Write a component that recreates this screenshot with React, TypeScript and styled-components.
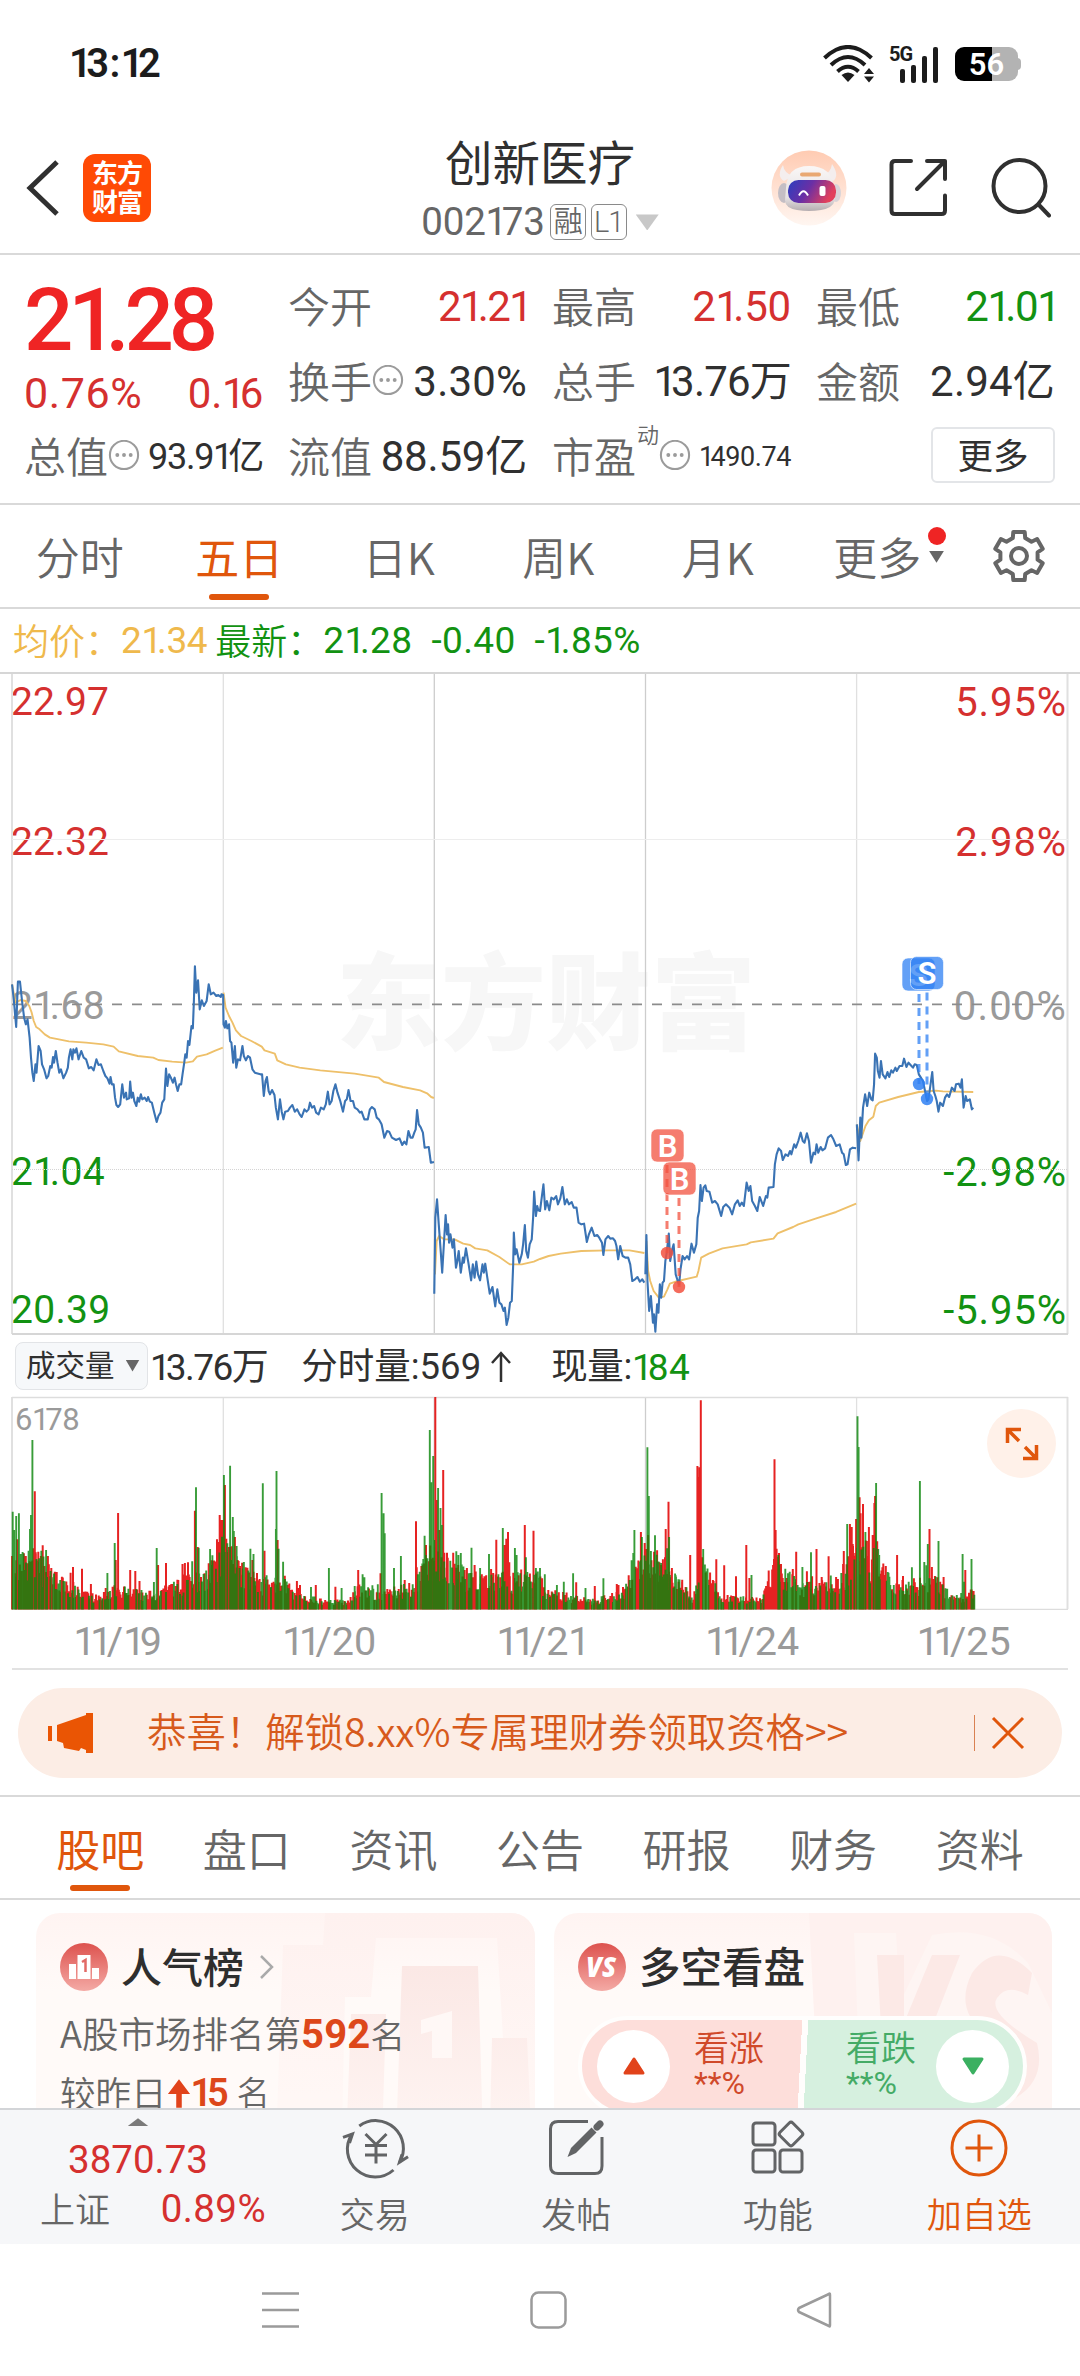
import React from "react";
import styled, { createGlobalStyle, css } from "styled-components";

const C = {
  red: "#d5302f",
  bright: "#ef2424",
  green: "#129212",
  orange: "#e0560c",
  brand: "#ff4a05",
  text: "#303030",
  sub: "#666666",
  mute: "#9a9a9a",
  line: "#d9d9d9",
  bar: "#f6f7f9",
};

const Global = createGlobalStyle`
  * { box-sizing: border-box; }
  html, body { margin: 0; padding: 0; background: #fff; }
  body { width: 1080px; font-family: Roboto, "Noto Sans CJK SC", sans-serif; color: ${C.text}; }
`;

const Screen = styled.div`
  width: 1080px;
  height: 2376px;
  display: flex;
  flex-direction: column;
  overflow: hidden;
  background: #fff;
`;

interface TextProps { $s: number; $c?: string; $w?: number; $ls?: number }
const Text = styled.span<TextProps>`
  font-size: ${(p) => p.$s}px;
  line-height: 1;
  color: ${(p) => p.$c ?? C.text};
  font-weight: ${(p) => p.$w ?? 400};
  letter-spacing: ${(p) => p.$ls ?? 0}px;
  white-space: pre;
`;
const Han = styled(Text)`
  font-family: "Noto Sans CJK SC", sans-serif;
  font-weight: ${(p) => p.$w ?? 350};
  padding-bottom: 4px;
`;
const NarrowOne = styled.span`
  letter-spacing: -0.14em;
`;

/* Numeral text with a proportional-width "1". */
function Num({ children, ...rest }: TextProps & { children: string }) {
  return (
    <Text {...rest}>
      {children.split(/(1)/).map((t, i) => (t === "1" ? <NarrowOne key={i}>1</NarrowOne> : t))}
    </Text>
  );
}

/* ---------- status bar ---------- */
const StatusBar = styled.div`
  height: 128px;
  display: flex;
  justify-content: space-between;
  align-items: center;
  padding: 0 59px 0 69px;
`;
const StatusIcons = styled.div`
  display: flex;
  align-items: center;
  height: 40px;
  gap: 14px;
`;
const Battery = styled.div`
  position: relative;
  width: 63px;
  height: 34px;
  border-radius: 9px;
  background: linear-gradient(90deg, #000 0 37px, #b3b3b3 37px);
  display: flex;
  align-items: center;
  justify-content: center;
  margin: 1px 3px 0 3px;
  &::after {
    content: "";
    position: absolute;
    right: -3px;
    top: 11px;
    width: 4px;
    height: 12px;
    border-radius: 0 4px 4px 0;
    background: #b3b3b3;
  }
`;

function Wifi() {
  return (
    <svg width="52" height="38" viewBox="0 0 52 38" fill="none" stroke="#1c1c1c" strokeWidth="4">
      <path d="M1.500 13 Q25 -9 48.500 13" />
      <path d="M8 20 Q25 4 42 20" />
      <path d="M14.500 26.500 Q25 17 35.500 26.500" />
      <path d="M18.500 30 Q25 25 31.500 30 L25 37 Z" fill="#1c1c1c" stroke="none" />
      <path d="M46 23 l5 6 h-10 z M46 37.500 l5 -6 h-10 z" fill="#1c1c1c" stroke="none" />
    </svg>
  );
}
const Signal = styled.div`
  position: relative;
  width: 49px;
  height: 38px;
  display: flex;
  align-items: flex-end;
  justify-content: flex-end;
  gap: 6px;
`;
const SignalBar = styled.i<{ $h: number }>`
  width: 5px;
  height: ${(p) => p.$h}px;
  border-radius: 2px;
  background: #1c1c1c;
`;
const NetTag = styled.span`
  position: absolute;
  left: 0;
  top: 0;
  font: 700 20px/18px Roboto, sans-serif;
  letter-spacing: -1px;
  color: #1c1c1c;
`;

/* ---------- header ---------- */
const Header = styled.header`
  height: 127px;
  border-bottom: 2px solid ${C.line};
  display: grid;
  grid-template-columns: 360px 1fr 360px;
`;
const HeaderLeft = styled.div`
  display: flex;
  align-items: center;
  padding: 0 0 5px 26px;
  gap: 24px;
`;
const Logo = styled.div`
  width: 68px;
  height: 68px;
  border-radius: 12px;
  background: ${C.brand};
  color: #fff;
  display: grid;
  place-content: center;
  font: 700 26px/29px "Noto Sans CJK SC", sans-serif;
  letter-spacing: -1px;
  padding-bottom: 3px;
`;
const HeaderCenter = styled.div`
  display: flex;
  flex-direction: column;
  align-items: center;
  padding-top: 9px;
  gap: 16px;
`;
const CodeRow = styled.div`
  display: flex;
  align-items: center;
  gap: 5px;
  height: 36px;
`;
const Tag = styled.span`
  width: 36px;
  height: 36px;
  border: 1.5px solid #8a8a8a;
  border-radius: 6px;
  display: grid;
  place-content: center;
  font: 350 29px/1 Roboto, "Noto Sans CJK SC", sans-serif;
  letter-spacing: -1px;
  color: ${C.sub};
`;
const Caret = styled.i<{ $w: number; $h: number; $c: string; $up?: boolean; $ml?: number }>`
  width: ${(p) => p.$w}px;
  height: ${(p) => p.$h}px;
  margin-left: ${(p) => p.$ml ?? 0}px;
  flex: none;
  background: ${(p) => p.$c};
  clip-path: ${(p) => (p.$up ? "polygon(50% 0, 100% 100%, 0 100%)" : "polygon(0 0, 100% 0, 50% 100%)")};
`;
const HeaderRight = styled.div`
  display: flex;
  align-items: center;
  padding: 0 29px 5px 51px;
  justify-content: space-between;
`;

function Robot() {
  return (
    <svg width="76" height="76" viewBox="0 0 76 76">
      <defs>
        <linearGradient id="rbBg" x1="0" y1="0" x2="0" y2="1">
          <stop offset="0" stopColor="#ffcbb2" /><stop offset="1" stopColor="#fff6f1" />
        </linearGradient>
        <linearGradient id="rbFace" x1="0" y1="0" x2="1" y2="0.300">
          <stop offset="0" stopColor="#2a3fc0" /><stop offset="0.500" stopColor="#6a2fa5" /><stop offset="1" stopColor="#e2405c" />
        </linearGradient>
        <linearGradient id="rbHead" x1="0" y1="0" x2="0" y2="1">
          <stop offset="0" stopColor="#faf7f6" /><stop offset="0.700" stopColor="#e6e2e3" /><stop offset="1" stopColor="#b5adb0" />
        </linearGradient>
      </defs>
      <circle cx="38" cy="38" r="37.500" fill="url(#rbBg)" />
      <path d="M12 15 Q5 26 13 31 L22 26 Q13 23 12 15Z M61 14 Q69 26 62 31 L53 25 Q60 22 61 14Z" fill="#f4eeee" />
      <ellipse cx="13" cy="43" rx="6" ry="10" fill="#c4bec4" />
      <ellipse cx="65" cy="43" rx="5" ry="9" fill="#d9d4d8" />
      <path d="M15 38 Q16 16 38 16 Q61 16 63 38 L64 50 Q62 58 50 60 Q38 62 26 60 Q14 58 14 50Z" fill="url(#rbHead)" />
      <rect x="29" y="22.500" width="21" height="4" rx="2" fill="#e9a872" />
      <rect x="17" y="30" width="48" height="23" rx="10.500" fill="url(#rbFace)" />
      <path d="M28 45.500 Q32.500 37 37 45.500" fill="none" stroke="#fff" strokeWidth="2" />
      <rect x="48.500" y="36" width="6" height="10" rx="2" fill="#fff" />
    </svg>
  );
}
const ShareIcon = () => (
  <svg width="60" height="60" viewBox="0 0 60 60" fill="none" stroke="#303030" strokeWidth="4" strokeLinecap="round" strokeLinejoin="round">
    <path d="M22 3 H6 Q2.500 3 2.500 6.500 V52.500 Q2.500 56 6 56 H52.500 Q56 56 56 52.500 V37.500" />
    <path d="M38 3 H56 V21 M56 3 L28 31" />
  </svg>
);
const SearchIcon = () => (
  <svg width="60" height="60" viewBox="0 0 60 60" fill="none" stroke="#303030" strokeWidth="4" strokeLinecap="round">
    <circle cx="28.500" cy="28" r="26" /><path d="M48 47 L58 57.500" />
  </svg>
);

/* ---------- quote ---------- */
const Quote = styled.section`
  height: 250px;
  border-bottom: 2px solid ${C.line};
  display: grid;
  grid-template-columns: repeat(4, 239px);
  column-gap: 25px;
  padding: 15px 0 0 24px;
`;
const Col = styled.div`
  display: flex;
  flex-direction: column;
`;
const Cell = styled.div<{ $h?: number; $pt?: number }>`
  height: ${(p) => p.$h ?? 75}px;
  padding-top: ${(p) => p.$pt ?? 0}px;
  display: flex;
  align-items: center;
  justify-content: space-between;
`;
const LabelBox = styled.span`
  display: flex;
  align-items: center;
`;
const Sup = styled(Han)`
  align-self: flex-start;
  margin: -12px 0 0 1px;
`;
const More = styled.div`
  width: 124px;
  height: 56px;
  margin: 0 0 4px auto;
  border: 2px solid #e3e5e8;
  border-radius: 6px;
  display: grid;
  place-content: center;
`;
const Dots = () => (
  <svg width="32" height="35" viewBox="0 0 31 34">
    <circle cx="15.500" cy="14.500" r="13.700" fill="none" stroke="#9b9b9b" strokeWidth="2" />
    {[9, 15.5, 22].map((x) => <circle key={x} cx={x} cy="14.500" r="1.900" fill="#9b9b9b" />)}
  </svg>
);

/* ---------- tabs ---------- */
const TabBar = styled.nav<{ $cols: string; $pad: string; $h: number }>`
  height: ${(p) => p.$h}px;
  border-bottom: 2px solid ${C.line};
  padding: ${(p) => p.$pad};
  display: grid;
  grid-template-columns: ${(p) => p.$cols};
`;
const Tab = styled.div<{ $on?: boolean }>`
  position: relative;
  display: flex;
  align-items: center;
  justify-content: center;
  font: 350 44px/1 "Noto Sans CJK SC", sans-serif;
  color: ${(p) => (p.$on ? C.orange : C.sub)};
  ${(p) => p.$on && css`
    font-weight: 400;
    &::after {
      content: "";
      position: absolute;
      left: calc(50% - 30px);
      bottom: 7px;
      width: 60px;
      height: 6px;
      border-radius: 3px;
      background: ${C.orange};
    }
  `}
`;
const MoreMark = styled.span`
  position: absolute;
  left: 130px;
  top: 22px;
  display: flex;
  flex-direction: column;
  align-items: center;
  gap: 6px;
`;
const RedDot = styled.i`
  width: 18px;
  height: 18px;
  border-radius: 50%;
  background: ${C.bright};
`;
function Gear() {
  const pts: string[] = [];
  for (let i = 0; i < 6; i++) {
    const a = (i * Math.PI) / 3 - Math.PI / 2;
    const p = (r: number, d: number) => `${(27 + r * Math.cos(a + d)).toFixed(1)} ${(27 + r * Math.sin(a + d)).toFixed(1)}`;
    pts.push(p(19, -0.33), p(24.8, -0.23), p(24.8, 0.23), p(19, 0.33));
  }
  return (
    <svg width="54" height="54" viewBox="0 0 54 54" fill="none" stroke="#666" strokeWidth="4" strokeLinejoin="round">
      <path d={`M${pts.join("L")}Z`} /><circle cx="27" cy="27" r="8" />
    </svg>
  );
}

/* ---------- chart ---------- */
const AvgRow = styled.div`
  height: 63px;
  display: flex;
  align-items: center;
  padding: 1px 0 0 13px;
  gap: 8px;
`;
const PriceChart = styled.section`
  position: relative;
  height: 663px;
`;
const Axis = styled.div<{ $y: number; $right?: boolean }>`
  position: absolute;
  top: ${(p) => p.$y - 690}px;
  ${(p) => (p.$right ? "right: 13px;" : "left: 11px;")}
  display: flex;
`;
const Watermark = styled.div`
  position: absolute;
  left: 336px;
  top: 269px;
  font: 900 105px/108px "Noto Sans CJK SC", sans-serif;
  color: #f7f7f7;
`;
const Plot = styled.svg`
  position: relative;
  display: block;
`;

const VLINES = [12, 223.3, 434.3, 645.5, 856.6, 1067.5];
const SX = 540 / 1568;

const PRICE = [
  "35,130 40,175 47,258 52,122 58,122 64,180 70,230 75,250 80,235 86,290 90,350 94,395 98,420 103,370 106,395 112,315 118,330 122,370 128,385 135,412 140,405 146,375 150,380 154,348 157,365 162,330 167,365 172,395 177,385 184,412 192,395 197,380 200,350 205,325 210,355 213,325 218,335 222,322 228,355 236,330 243,350 250,355 258,382 265,378 272,388 280,355 286,372 293,370 300,390 306,405 312,412 318,428 321,408 325,430 330,430 334,470 338,492 343,498 349,490 355,430 360,470 366,455 368,475 375,472 378,422 382,470 386,455 390,480 396,495 400,470 404,482 409,460 413,475 420,470 426,480 430,468 435,482 441,485 448,515 455,543 460,525 466,515 471,485 477,475 480,420 482,383 486,435 491,400 497,412 502,425 507,410 511,430 516,450 521,430 526,430 530,400 535,365 538,340 542,350 546,300 550,312 556,255 560,262 563,180 566,76 570,155 575,118 580,205 586,178 592,195 600,180 606,130 612,160 620,155 628,165 634,162 641,168 643,160 648,162 649,250 653,260 656,240 660,262 665,250 668,300 672,305 677,365 682,315 686,380 691,355 697,358 704,315 708,345 714,358 720,345 726,350 733,385 740,395 756,400 761,400 766,465 771,420 775,408 780,450 784,460 790,447 797,462 801,500 807,535 813,475 818,512 823,535 828,512 836,510 842,500 849,492 856,512 863,505 870,520 876,528 884,505 890,512 896,505 900,485 906,500 912,495 918,515 925,520 932,500 940,505 946,490 952,452 957,490 963,480 968,450 974,430 980,455 988,480 996,512 1002,480 1007,475 1012,447 1018,480 1025,480 1030,500 1038,505 1045,515 1050,512 1058,535 1068,535 1074,505 1080,498 1088,505 1094,530 1100,535 1108,550 1116,590 1124,570 1130,572 1138,590 1150,597 1160,592 1168,612 1174,602 1180,610 1186,570 1192,590 1198,590 1203,575 1207,565 1211,507 1216,550 1222,560 1228,575 1233,620 1245,618 1251,665 1260,663",
  "1261,1058 1264,830 1269,775 1274,850 1280,935 1284,995 1290,890 1294,822 1298,880 1301,850 1304,905 1308,880 1314,920 1318,895 1324,980 1328,960 1332,930 1338,995 1344,950 1347,965 1353,922 1360,965 1368,1018 1373,970 1378,1010 1383,962 1388,1000 1394,1018 1401,970 1405,995 1409,968 1415,1010 1422,1058 1430,1038 1438,1096 1444,1045 1450,1085 1456,1090 1462,1110 1466,1100 1471,1152 1476,1130 1481,1085 1486,1080 1490,975 1492,875 1496,940 1500,925 1508,965 1515,940 1519,910 1524,852 1528,930 1533,950 1538,910 1544,895 1548,830 1551,752 1556,825 1560,795 1563,808 1568,810 1573,770 1578,730 1583,805 1588,780 1595,808 1601,770 1608,775 1615,765 1620,790 1627,772 1633,738 1640,790 1646,775 1652,790 1660,783 1666,800 1674,800 1680,845 1688,850 1696,848 1704,903 1710,880 1718,860 1726,885 1734,882 1740,890 1748,905 1752,942 1758,895 1766,885 1772,893 1780,892 1786,900 1790,915 1795,955 1801,915 1808,945 1816,950 1824,950 1830,970 1836,1020 1844,1015 1851,1008 1858,1022 1865,1015 1871,1025",
  "1874,1000 1877,882 1880,1020 1885,1110 1890,1065 1896,1145 1899,1120 1903,1172 1908,1090 1912,1115 1916,1030 1920,1070 1924,1025 1928,1020 1932,960 1936,935 1942,878 1946,960 1952,925 1956,910 1962,1000 1968,1020 1972,1030 1976,985 1982,945 1988,955 1995,945 2001,955 2008,908 2015,935 2022,910 2026,830 2030,810 2034,732 2038,780 2043,740 2048,733 2052,750 2060,752 2068,785 2076,780 2084,790 2094,825 2100,798 2108,790 2118,800 2126,820 2134,790 2142,778 2148,795 2154,785 2160,795 2168,725 2174,750 2179,735 2184,780 2192,795 2199,810 2206,768 2216,795 2224,765 2228,770 2232,740 2246,738 2250,670 2255,640 2261,622 2268,630 2273,657 2281,640 2288,645 2294,630 2298,640 2306,610 2311,620 2318,600 2325,575 2331,600 2336,605 2343,577 2349,600 2355,665 2362,635 2367,640 2371,610 2376,635 2383,618 2388,628 2396,622 2404,590 2413,582 2420,595 2428,615 2438,610 2445,635 2450,640 2456,672 2461,670 2468,625 2476,620 2486,622",
  "2488,550 2493,658 2498,530 2501,590 2506,500 2512,460 2518,495 2524,455 2530,475 2534,478 2538,430 2541,338 2546,350 2549,390 2554,410 2558,360 2563,400 2571,412 2577,393 2582,408 2588,388 2593,395 2600,380 2604,390 2612,375 2620,375 2625,353 2632,378 2638,365 2644,372 2651,380 2656,370 2662,372 2668,400 2674,410 2680,420 2686,450 2692,480 2696,475 2702,430 2707,393 2711,450 2716,465 2720,480 2725,512 2730,485 2738,495 2744,470 2750,460 2756,468 2764,440 2772,450 2776,430 2784,428 2789,440 2793,415 2798,500 2804,465 2808,480 2816,475 2822,505 2826,500",
];
const AVERAGE = [
  "35,130 45,185 60,177 75,180 85,195 92,215 98,240 105,258 115,265 130,280 145,290 160,293 200,301 250,305 300,310 330,317 345,331 400,345 445,350 460,357 500,362 540,365 560,361 572,347 600,340 625,329 647,320",
  "649,155 655,200 665,225 675,245 685,268 700,285 730,300 760,317 768,328 798,338 805,358 830,370 870,380 930,388 1030,398 1100,410 1115,423 1170,438 1220,448 1240,457 1252,468 1260,471",
  "1263,1000 1268,900 1275,885 1290,895 1320,895 1345,908 1365,912 1380,922 1415,928 1450,948 1480,970 1515,970 1550,962 1568,954 1593,945 1628,938 1688,930 1768,928 1828,928 1871,936",
  "1877,900 1882,990 1888,1020 1898,1050 1913,1070 1928,1067 1938,1045 1945,1028 1968,1020 2023,1007 2028,990 2036,950 2058,938 2098,922 2168,910 2180,904 2246,893 2258,877 2303,858 2318,850 2368,833 2428,813 2486,788",
  "2488,550 2498,600 2513,555 2523,538 2536,527 2543,495 2553,485 2608,468 2668,453 2718,449 2738,451 2826,453",
];

const BADGES = [
  { x: 651, y: 1128, dx: 667, dy: 1252, t: "B", c: "#f2513f" },
  { x: 663, y: 1161, dx: 679, dy: 1286, t: "B", c: "#f2513f" },
  { x: 902, y: 957, dx: 919, dy: 1083, t: "S", c: "#2f80f3" },
  { x: 910.5, y: 955.5, dx: 927, dy: 1098, t: "S", c: "#2f80f3" },
];

function PricePlot() {
  return (
    <Plot width="1080" height="663" viewBox="0 671 1080 663" fill="none">
      {VLINES.map((x, i) => (
        <path key={x} d={`M${x} 671V1333`} stroke={i === 2 || i === 3 ? "#cdcdcd" : "#e0e0e0"} strokeWidth={i === 0 || i === 5 ? 2 : 1.3} />
      ))}
      <path d="M0 672H1080 M12 1333H1068" stroke="#d6d6d6" strokeWidth="2" />
      <path d="M12 838.500H1068" stroke="#ededed" strokeWidth="1" />
      <path d="M12 1168.500H1068" stroke="#d4d4d4" strokeWidth="1" strokeDasharray="1 1" />
      <path d="M12 1003.300H1064" stroke="#8c8c8c" strokeWidth="1.700" strokeDasharray="10 10" />
      <g transform={`translate(0 940) scale(${SX} 0.33333)`} strokeLinejoin="round">
        {AVERAGE.map((p) => <polyline key={p} points={p} stroke="#eec06a" strokeWidth="1.900" vectorEffect="non-scaling-stroke" />)}
        {PRICE.map((p) => <polyline key={p} points={p} stroke="#3a73b4" strokeWidth="2.100" vectorEffect="non-scaling-stroke" />)}
      </g>
      {BADGES.map((b) => (
        <g key={b.x}>
          <path d={`M${b.dx} ${b.y + 36}V${b.dy}`} stroke={b.c} strokeOpacity="0.750" strokeWidth="3" strokeDasharray="8 6" />
          <circle cx={b.dx} cy={b.dy} r="6.200" fill={b.c} fillOpacity="0.850" />
          <rect x={b.x} y={b.y} width="33" height="33" rx="6" fill={b.c} fillOpacity="0.750" stroke="#fff" strokeOpacity="0.600" strokeWidth="1" />
          <text x={b.x + 16.5} y={b.y + 27.5} textAnchor="middle" fill="#fff" fontSize="31" fontWeight="600" fontFamily="Roboto">{b.t}</text>
        </g>
      ))}
    </Plot>
  );
}

/* ---------- volume ---------- */
const VolumeInfo = styled.div`
  height: 62px;
  display: flex;
  align-items: center;
  padding: 3px 0 0 15px;
`;
const VolumeButton = styled.div`
  width: 133px;
  height: 48px;
  border: 1.5px solid #e2e4e7;
  border-radius: 8px;
  background: #f6f8fa;
  display: flex;
  align-items: center;
  padding-left: 10px;
  margin: 0 2px 3px 0;
`;
const UpArrow = styled.svg`
  margin-left: 9px;
`;
const Gap = styled.i<{ $w: number }>`
  width: ${(p) => p.$w}px;
`;
const VolumeChart = styled.section`
  position: relative;
  height: 214px;
`;
const MaxVolume = styled.div`
  position: absolute;
  left: 15px;
  top: 8px;
  display: flex;
`;
const Expand = styled.div`
  position: absolute;
  left: 987px;
  top: 13px;
  width: 69px;
  height: 69px;
  border-radius: 50%;
  background: #fff1e9;
  display: grid;
  place-content: center;
`;
const Dates = styled.div`
  height: 60px;
  margin: 0 12px;
  border-bottom: 2px solid #e2e2e2;
  display: grid;
  grid-template-columns: repeat(5, 211.500px);
  align-items: center;
  justify-items: center;
  padding: 4px 0 0 0;
`;

type Spike = [number, number, "r" | "g"];
const SPIKES: Spike[] = [
  [37, 545, "g"], [41, 600, "g"], [47, 558, "g"], [50, 628, "r"], [55, 550, "g"], [60, 672, "g"], [69, 670, "r"], [75, 678, "r"], [83, 662, "g"], [87, 597, "g"], [90, 555, "g"], [94, 330, "g"], [97, 655, "r"], [101, 484, "r"], [104, 672, "r"], [113, 697, "g"], [120, 662, "g"], [124, 646, "r"], [134, 660, "g"], [139, 678, "r"], [149, 714, "r"], [159, 725, "r"], [184, 753, "g"], [205, 728, "r"], [212, 711, "r"], [238, 716, "r"], [264, 762, "r"], [312, 729, "g"], [333, 639, "g"], [336, 690, "r"], [343, 549, "r"], [378, 720, "r"], [393, 723, "r"], [405, 753, "r"], [447, 756, "g"], [455, 654, "g"], [459, 705, "r"], [482, 699, "r"], [515, 762, "g"], [530, 702, "r"], [537, 699, "r"], [546, 697, "r"], [558, 694, "g"], [566, 542, "r"], [569, 472, "g"], [574, 651, "r"], [577, 653, "g"], [610, 657, "g"], [606, 700, "r"], [614, 705, "g"], [630, 628, "r"], [634, 636, "r"], [638, 555, "r"], [643, 570, "r"], [647, 570, "r"], [650, 435, "g"], [653, 465, "r"], [657, 626, "r"], [660, 640, "g"], [664, 660, "r"], [668, 407, "g"], [672, 690, "g"], [676, 561, "g"], [679, 603, "g"], [682, 621, "r"], [687, 648, "g"], [697, 708, "r"], [707, 698, "g"], [727, 656, "g"], [736, 672, "g"], [733, 690, "r"], [763, 460, "g"], [768, 662, "r"], [801, 597, "g"], [803, 423, "g"], [806, 630, "r"], [809, 656, "g"], [822, 695, "g"], [827, 737, "r"], [862, 753, "r"], [871, 765, "r"], [903, 771, "g"], [917, 765, "r"], [955, 714, "g"], [974, 770, "r"], [992, 774, "g"], [1030, 768, "g"], [1040, 720, "r"], [1053, 733, "g"], [1058, 742, "g"], [1097, 763, "g"], [1108, 489, "g"], [1105, 730, "r"], [1114, 550, "g"], [1117, 610, "g"], [1144, 714, "g"], [1164, 678, "g"], [1175, 750, "r"], [1208, 574, "r"], [1210, 712, "r"], [1229, 687, "g"], [1233, 617, "g"], [1237, 645, "r"], [1241, 685, "g"], [1245, 694, "r"], [1248, 300, "g"], [1252, 457, "g"], [1258, 378, "g"], [1261, 630, "g"], [1264, 201, "r"], [1268, 510, "r"], [1272, 474, "g"], [1276, 600, "r"], [1279, 534, "g"], [1283, 585, "g"], [1287, 420, "r"], [1290, 668, "r"], [1298, 668, "r"], [1316, 668, "r"], [1325, 664, "g"], [1331, 675, "g"], [1338, 669, "g"], [1349, 720, "r"], [1369, 653, "g"], [1378, 705, "r"], [1394, 714, "g"], [1420, 672, "g"], [1426, 717, "r"], [1441, 629, "r"], [1460, 594, "g"], [1465, 645, "r"], [1470, 626, "r"], [1475, 606, "r"], [1479, 697, "r"], [1495, 654, "g"], [1500, 675, "g"], [1506, 736, "r"], [1524, 585, "r"], [1527, 682, "g"], [1549, 602, "r"], [1556, 714, "g"], [1568, 714, "g"], [1574, 745, "r"], [1582, 733, "g"], [1617, 765, "g"], [1637, 755, "g"], [1664, 730, "g"], [1673, 757, "r"], [1700, 774, "g"], [1727, 768, "r"], [1752, 745, "g"], [1791, 762, "r"], [1796, 765, "r"], [1809, 771, "r"], [1834, 691, "g"], [1839, 669, "g"], [1842, 600, "g"], [1846, 710, "r"], [1861, 606, "r"], [1864, 621, "g"], [1872, 639, "r"], [1876, 657, "r"], [1880, 352, "g"], [1884, 498, "g"], [1882, 615, "r"], [1890, 663, "g"], [1902, 616, "g"], [1908, 661, "r"], [1920, 705, "r"], [1931, 682, "r"], [1933, 597, "r"], [1937, 655, "g"], [1941, 515, "r"], [1943, 621, "g"], [1951, 714, "r"], [1962, 736, "g"], [1970, 748, "g"], [1981, 749, "r"], [2004, 675, "r"], [2025, 408, "r"], [2028, 442, "r"], [2031, 412, "r"], [2035, 211, "r"], [2039, 682, "r"], [2042, 657, "g"], [2049, 724, "g"], [2070, 750, "r"], [2080, 688, "r"], [2103, 706, "r"], [2137, 739, "r"], [2167, 645, "r"], [2176, 744, "r"], [2182, 735, "g"], [2230, 768, "r"], [2249, 388, "r"], [2252, 600, "r"], [2255, 656, "r"], [2262, 669, "r"], [2257, 680, "r"], [2264, 755, "g"], [2284, 744, "r"], [2302, 717, "r"], [2312, 665, "r"], [2330, 711, "g"], [2343, 724, "r"], [2355, 667, "g"], [2358, 739, "r"], [2371, 657, "r"], [2386, 741, "r"], [2406, 679, "r"], [2433, 747, "r"], [2448, 702, "r"], [2450, 663, "r"], [2460, 582, "g"], [2463, 679, "r"], [2468, 582, "r"], [2473, 591, "r"], [2477, 648, "r"], [2486, 567, "r"], [2490, 259, "g"], [2493, 351, "g"], [2496, 502, "r"], [2499, 550, "r"], [2502, 652, "r"], [2506, 522, "r"], [2513, 606, "g"], [2517, 633, "r"], [2523, 591, "r"], [2534, 615, "r"], [2539, 519, "r"], [2544, 459, "g"], [2541, 498, "r"], [2547, 634, "r"], [2550, 657, "g"], [2553, 675, "g"], [2572, 708, "r"], [2579, 732, "g"], [2605, 675, "r"], [2622, 738, "r"], [2648, 712, "g"], [2671, 453, "g"], [2684, 696, "g"], [2690, 706, "g"], [2694, 642, "g"], [2699, 597, "r"], [2706, 711, "r"], [2725, 633, "g"], [2740, 741, "r"], [2795, 672, "g"], [2799, 755, "g"], [2803, 720, "r"], [2821, 687, "g"], [2827, 783, "r"],
];
/* Typical bar height at points along the session, used between the spikes. */
const LEVEL: [number, number][] = [
  [35, 150], [60, 125], [95, 140], [150, 95], [200, 65], [280, 32], [330, 60], [420, 40], [500, 60], [560, 85], [600, 85], [640, 160], [700, 115], [760, 75], [820, 70], [880, 38], [940, 22], [1010, 20], [1050, 65], [1100, 45], [1200, 60], [1250, 140], [1290, 120], [1400, 75], [1500, 85], [1560, 90], [1590, 45], [1720, 24], [1800, 40], [1850, 105], [1900, 130], [1950, 95], [2010, 30], [2045, 100], [2100, 32], [2210, 26], [2250, 130], [2320, 60], [2400, 75], [2440, 80], [2490, 170], [2540, 130], [2600, 60], [2660, 70], [2710, 80], [2770, 30], [2826, 45],
];
const BASE = 838;
function levelAt(x: number) {
  for (let i = 1; i < LEVEL.length; i++) {
    const [x1, y1] = LEVEL[i];
    if (x <= x1) {
      const [x0, y0] = LEVEL[i - 1];
      return y0 + ((y1 - y0) * (x - x0)) / (x1 - x0);
    }
  }
  return 40;
}
function buildBars(): Spike[] {
  let seed = 20251125;
  const rnd = () => {
    seed = (seed * 1664525 + 1013904223) >>> 0;
    return seed / 4294967296;
  };
  const bars: Spike[] = [];
  for (let x = 35; x < 2829; x += 2.54) {
    const h = levelAt(x) * (0.55 + 0.85 * rnd());
    bars.push([x, BASE - h, rnd() < 0.62 ? "r" : "g"]);
  }
  return bars.concat(SPIKES).sort((a, b) => a[0] - b[0]);
}
const BARS = buildBars();
const barPath = (k: "r" | "g") =>
  BARS.filter((b) => b[2] === k).map(([x, y]) => `M${(x * SX).toFixed(1)} ${(y / 3 + 1330).toFixed(1)}V1609.5`).join("");

function VolumePlot() {
  return (
    <Plot width="1080" height="214" viewBox="0 1396 1080 214" fill="none">
      {VLINES.map((x, i) => (
        <path key={x} d={`M${x} 1397V1609`} stroke={i === 2 || i === 3 ? "#cdcdcd" : "#e0e0e0"} strokeWidth={i === 0 || i === 5 ? 2 : 1.3} />
      ))}
      <path d="M12 1397.500H1068 M12 1609.500H1068" stroke="#dddddd" strokeWidth="1.500" />
      <path d={barPath("r")} stroke="#e62222" strokeWidth="2" />
      <path d={barPath("g")} stroke="#0c860c" strokeWidth="1.900" strokeOpacity="0.820" />
    </Plot>
  );
}

/* ---------- banner ---------- */
const BannerWrap = styled.div`
  height: 127px;
  border-bottom: 2px solid ${C.line};
  padding: 18px 18px 0;
`;
const Banner = styled.div`
  height: 90px;
  border-radius: 45px;
  background: #fcede5;
  display: flex;
  align-items: center;
  padding: 0 37px 0 30px;
`;
const BannerText = styled.span`
  flex: 1;
  padding: 0 0 7px 53px;
  font: 350 39.4px/1 "Noto Sans CJK SC", sans-serif;
  color: #d75a1c;
  white-space: nowrap;
`;
const Divider = styled.i`
  width: 1.5px;
  height: 36px;
  margin-right: 16px;
  background: #d98152;
`;

/* ---------- cards ---------- */
const Cards = styled.section`
  height: 208px;
  overflow: hidden;
  display: grid;
  grid-template-columns: 499px 498px;
  gap: 19px;
  padding: 13px 0 0 36px;
`;
const Card = styled.div`
  position: relative;
  height: 260px;
  border-radius: 24px;
  overflow: hidden;
  background: linear-gradient(180deg, #fff4f2, #fffaf8 30%, #fffaf8);
  padding: 30px 24px 0;
`;
const CardArt = styled.svg`
  position: absolute;
  right: 0;
  top: 0;
`;
const CardHead = styled.div`
  position: relative;
  display: flex;
  align-items: center;
  height: 48px;
`;
const Chevron = styled.svg`
  margin-left: 15px;
`;
const CardLine = styled.div<{ $mt: number }>`
  position: relative;
  display: flex;
  align-items: center;
  height: 40px;
  margin-top: ${(p) => p.$mt}px;
`;
const Vote = styled.div`
  position: absolute;
  left: 24px;
  top: 103px;
  width: 449px;
  height: 100px;
  border: 4px solid #fffefd;
  border-radius: 50px;
  overflow: hidden;
  display: flex;
  background: linear-gradient(93deg, #fddeda 0 220px, #fffdfc 220px 226px, #d6f0df 226px);
`;
const VoteSide = styled.div<{ $end?: boolean }>`
  width: 50%;
  display: flex;
  flex-direction: ${(p) => (p.$end ? "row-reverse" : "row")};
  align-items: center;
  padding: 0 ${(p) => (p.$end ? 14 : 15)}px;
  gap: ${(p) => (p.$end ? 20 : 24)}px;
`;
const VoteDisc = styled.div`
  width: 73px;
  height: 73px;
  border-radius: 50%;
  background: #fff;
  display: grid;
  place-content: center;
`;
const VoteText = styled.div`
  display: flex;
  flex-direction: column;
  padding-bottom: 5px;
`;

/* ---------- bottom ---------- */
const BottomBar = styled.footer`
  height: 136px;
  border-top: 2px solid #d3d5d8;
  background: ${C.bar};
  display: grid;
  grid-template-columns: 274px repeat(4, 201.500px);
`;
const IndexBox = styled.div`
  display: flex;
  flex-direction: column;
  align-items: center;
  padding: 8px 0 0 2px;
`;
const IndexRow = styled.div<{ $center?: boolean }>`
  width: 100%;
  display: flex;
  justify-content: ${(p) => (p.$center ? "center" : "space-between")};
  align-items: center;
  padding: ${(p) => (p.$center ? "0" : "0 8px 0 38px")};
  margin-top: ${(p) => (p.$center ? 15 : 10)}px;
`;
const Action = styled.div`
  display: flex;
  flex-direction: column;
  align-items: center;
  padding-top: 6px;
  gap: 15px;
`;
const NavBar = styled.div`
  height: 132px;
  display: flex;
  align-items: center;
`;
const NavSlot = styled.div<{ $ml: number }>`
  width: 36px;
  height: 38px;
  margin-left: ${(p) => p.$ml}px;
`;

const icon = { width: 68, height: 64, viewBox: "-1 0 68 64", fill: "none", stroke: "#626466", strokeWidth: 3 };
const TradeIcon = () => (
  <svg {...icon}>
    <path d="M17.300 10 A27.700 27.700 0 0 1 57.500 46.500 M51.500 54 A27.700 27.700 0 0 1 10 18" />
    <path d="M1 21.300 L10.500 18 L7.500 27 M66 40.800 L57.500 46.300 L60 38.500" />
    <path d="M23.500 18 L34 28.500 L44.500 18 M23 29.500 H45 M23 39 H45 M34 28 V47.500" />
  </svg>
);
const PostIcon = () => (
  <svg {...icon}>
    <path d="M45 5.500 H15 Q7.500 5.500 7.500 13 V50 Q7.500 57.500 15 57.500 H52 Q59 57.500 59 50 V21" />
    <path d="M57 8 L54 11" strokeWidth="7" strokeLinecap="round" />
    <path d="M24.500 41 L28 32 L48.500 11.500 L53.500 16.500 L33 37 Z" fill="#626466" stroke="none" />
  </svg>
);
const FeatureIcon = () => (
  <svg {...icon}>
    <rect x="8" y="7" width="22" height="22" rx="3" />
    <rect x="8" y="34" width="22" height="22" rx="3" />
    <rect x="35" y="34" width="22" height="22" rx="3" />
    <rect x="37" y="9" width="18" height="18" rx="2.500" transform="rotate(45 46 18)" />
  </svg>
);
const AddIcon = () => (
  <svg {...icon} stroke={C.orange}>
    <circle cx="33" cy="32" r="27" /><path d="M19.500 32 H46.500 M33 18.500 V45.500" />
  </svg>
);

function Stat({ label, value, color = C.text, size = 42, ls = -0.8, dots, sup }: { label: string; value: string; color?: string; size?: number; ls?: number; dots?: boolean; sup?: string }) {
  return (
    <Cell>
      <LabelBox>
        <Han $s={42} $c={C.sub}>{label}</Han>
        {sup && <Sup $s={22} $c={C.sub}>{sup}</Sup>}
        {dots && <Dots />}
      </LabelBox>
      <Num $s={size} $c={color} $ls={ls}>{value}</Num>
    </Cell>
  );
}

export default function App() {
  return (
    <Screen>
      <Global />
      <StatusBar>
        <Num $s={40} $c="#1c1c1c" $w={600} $ls={0.3}>13:12</Num>
        <StatusIcons>
          <Wifi />
          <Signal>
            <NetTag>5G</NetTag>
            {[14, 18, 27, 36].map((h) => <SignalBar key={h} $h={h} />)}
          </Signal>
          <Battery><Text $s={31} $c="#fff" $w={600}>56</Text></Battery>
        </StatusIcons>
      </StatusBar>

      <Header>
        <HeaderLeft>
          <svg width="33" height="56" viewBox="0 0 33 56" fill="none" stroke="#303030" strokeWidth="5">
            <path d="M31 2 L4 28 L31 54" />
          </svg>
          <Logo><span>东方</span><span>财富</span></Logo>
        </HeaderLeft>
        <HeaderCenter>
          <Han $s={47.5} $w={400}>创新医疗</Han>
          <CodeRow>
            <Num $s={38.5} $c={C.sub} $ls={-0.2}>002173</Num>
            <Tag>融</Tag>
            <Tag>L1</Tag>
            <Caret $w={23} $h={16} $c="#c8c8c8" $ml={4} />
          </CodeRow>
        </HeaderCenter>
        <HeaderRight>
          <Robot /><ShareIcon /><SearchIcon />
        </HeaderRight>
      </Header>

      <Quote>
        <Col>
          <Cell $h={98} $pt={4}><Num $s={87} $c={C.bright} $w={500} $ls={-5.2}>21.28</Num></Cell>
          <Cell $h={52}>
            <Num $s={43} $c={C.red} $ls={0.6}>0.76%</Num>
            <Num $s={42} $c={C.red} $ls={-0.3}>0.16</Num>
          </Cell>
          <Stat label="总值" value="93.91亿" size={36} ls={-1.3} dots />
        </Col>
        <Col>
          <Stat label="今开" value="21.21" color={C.red} ls={-1.6} />
          <Stat label="换手" value="3.30%" dots ls={0.2} />
          <Stat label="流值" value="88.59亿" ls={-0.2} />
        </Col>
        <Col>
          <Stat label="最高" value="21.50" color={C.red} ls={-0.2} />
          <Stat label="总手" value="13.76万" ls={-0.8} />
          <Stat label="市盈" sup="动" value="1490.74" size={27} ls={-0.4} dots />
        </Col>
        <Col>
          <Stat label="最低" value="21.01" color={C.green} ls={-1.3} />
          <Stat label="金额" value="2.94亿" ls={0.2} />
          <Cell><More><Han $s={35.5} $w={400}>更多</Han></More></Cell>
        </Col>
      </Quote>

      <TabBar $cols="repeat(6, 159.500px) 123px" $pad="0" $h={104}>
        <Tab>分时</Tab>
        <Tab $on>五日</Tab>
        <Tab>日K</Tab>
        <Tab>周K</Tab>
        <Tab>月K</Tab>
        <Tab>更多<MoreMark><RedDot /><Caret $w={15} $h={12} $c="#666" /></MoreMark></Tab>
        <Tab><Gear /></Tab>
      </TabBar>

      <AvgRow>
        <LabelBox><Han $s={36} $c="#efb94c">均价：</Han><Num $s={37} $c="#efb94c" $ls={-0.4}>21.34</Num></LabelBox>
        <LabelBox>
          <Han $s={36} $c={C.green}>最新：</Han>
          <Num $s={37} $c={C.green} $ls={0.35}>21.28  -0.40  -1.85%</Num>
        </LabelBox>
      </AvgRow>

      <PriceChart>
        <Watermark>东方财富</Watermark>
        <Axis $y={701}><Num $s={39} $c={C.red}>22.97</Num></Axis>
        <Axis $y={841}><Num $s={39} $c={C.red}>22.32</Num></Axis>
        <Axis $y={1005}><Num $s={39} $c={C.mute} $ls={0.4}>21.68</Num></Axis>
        <Axis $y={1171}><Num $s={39} $c={C.green} $ls={0.4}>21.04</Num></Axis>
        <Axis $y={1309}><Num $s={39} $c={C.green} $ls={0.3}>20.39</Num></Axis>
        <Axis $right $y={701}><Num $s={40} $c={C.red} $ls={0.9}>5.95%</Num></Axis>
        <Axis $right $y={841}><Num $s={40} $c={C.red} $ls={0.9}>2.98%</Num></Axis>
        <Axis $right $y={1005}><Num $s={40} $c={C.mute} $ls={1.2}>0.00%</Num></Axis>
        <Axis $right $y={1171}><Num $s={40} $c={C.green} $ls={0.9}>-2.98%</Num></Axis>
        <Axis $right $y={1309}><Num $s={40} $c={C.green} $ls={0.9}>-5.95%</Num></Axis>
        <PricePlot />
      </PriceChart>

      <VolumeInfo>
        <VolumeButton><Han $s={29.5} $w={400}>成交量</Han><Caret $w={14} $h={12} $c="#666" $ml={11} /></VolumeButton>
        <Num $s={37} $ls={-1.5}>13.76万</Num>
        <Gap $w={34} />
        <Num $s={36.5} $ls={0}>分时量:569</Num>
        <UpArrow width="22" height="34" viewBox="0 0 22 34" fill="none" stroke="#303030" strokeWidth="2.500">
          <path d="M11 32 V4 M2 13 L11 3 L20 13" />
        </UpArrow>
        <Gap $w={39} />
        <Num $s={36.5} $ls={-0.3}>现量:</Num>
        <Num $s={37} $c={C.green} $ls={0.5}>184</Num>
      </VolumeInfo>

      <VolumeChart>
        <MaxVolume><Num $s={31} $c={C.mute} $ls={-0.4}>6178</Num></MaxVolume>
        <VolumePlot />
        <Expand>
          <svg width="36" height="36" viewBox="0 0 36 36" fill="none" stroke={C.orange} strokeWidth="3.500">
            <path d="M17 3.500 H3.500 V17 M4 4 L15 15 M19 32.500 H32.500 V19 M32 32 L21 21" />
          </svg>
        </Expand>
      </VolumeChart>
      <Dates>
        {["11/19", "11/20", "11/21", "11/24", "11/25"].map((d) => <Num key={d} $s={39.5} $c={C.mute} $ls={0}>{d}</Num>)}
      </Dates>

      <BannerWrap>
        <Banner>
          <svg width="46" height="40" viewBox="0 0 46 40" fill="#ea5504">
            <path d="M0 13h4v15H0z M9 12 L38 2 V0h7v40h-7v-3 L33 35 L31 38 L16 35 L15 30 L9 28 Z" />
          </svg>
          <BannerText>恭喜！解锁8.xx%专属理财券领取资格&gt;&gt;</BannerText>
          <Divider />
          <svg width="34" height="34" viewBox="0 0 34 34" stroke={C.orange} strokeWidth="3">
            <path d="M2 2 L32 32 M32 2 L2 32" />
          </svg>
        </Banner>
      </BannerWrap>

      <TabBar $cols="repeat(7, 1fr)" $pad="0 27px" $h={103}>
        {["股吧", "盘口", "资讯", "公告", "研报", "财务", "资料"].map((t, i) => <Tab key={t} $on={i === 0}>{t}</Tab>)}
      </TabBar>

      <Cards>
        <Card>
          <CardArt width="260" height="260" viewBox="0 0 260 260">
            <defs>
              <linearGradient id="art" x1="0" y1="0" x2="0" y2="1">
                <stop offset="0" stopColor="#fbe8e5" /><stop offset="1" stopColor="#fff7f5" />
              </linearGradient>
              <linearGradient id="back" x1="0" y1="0" x2="0" y2="1">
                <stop offset="0" stopColor="#fef1ef" /><stop offset="0.700" stopColor="#fff7f5" />
              </linearGradient>
            </defs>
            <path d="M50 0 H260 V260 H236 L222 25 H101 L96 84 H70 L66 260 H0 L8 32 H48 Z" fill="url(#back)" />
            <path d="M127 53 H203 L209 260 H120 Z M76 101 H111 L106 260 H70 Z M217 125 H252 L258 260 H214 Z" fill="url(#art)" />
            <path d="M146 107 L177 98 V145 H157 V118 L146 121 Z" fill="#fff8f6" />
          </CardArt>
          <CardHead>
            <svg width="48" height="48" viewBox="0 0 48 48">
              <defs><linearGradient id="badge" x1="0" y1="0" x2="0" y2="1"><stop offset="0" stopColor="#dd524e" /><stop offset="1" stopColor="#f4aaa5" /></linearGradient></defs>
              <circle cx="24" cy="24" r="24" fill="url(#badge)" />
              <path d="M9 21h7v15H9z M17.500 12h13v24h-13z M32 25h7v11h-7z" fill="#fff" />
              <path d="M22 19 L25.500 17 V29" fill="none" stroke="#e26a66" strokeWidth="2.500" />
            </svg>
            <Gap $w={13} />
            <Han $s={41} $w={500} $c="#2e2e2e">人气榜</Han>
            <Chevron width="16" height="26" viewBox="0 0 16 26" fill="none" stroke="#aaa" strokeWidth="2.500">
              <path d="M2 2 L13 13 L2 24" />
            </Chevron>
          </CardHead>
          <CardLine $mt={24}>
            <Han $s={36.5} $c={C.sub}>A股市场排名第</Han>
            <Text $s={40} $c="#dd471a" $w={700} $ls={0.2}>592</Text>
            <Han $s={34.5} $c={C.sub}>名</Han>
          </CardLine>
          <CardLine $mt={18}>
            <Han $s={35.5} $c={C.sub}>较昨日</Han>
            <svg width="24" height="32" viewBox="0 0 26 32" fill="#e1431b"><path d="M13 1 L25 17 H16 V32 H10 V17 H1 Z" /></svg>
            <Num $s={38} $c="#dd471a" $w={600}>15</Num>
            <Gap $w={8} />
            <Han $s={33} $c={C.sub}>名</Han>
          </CardLine>
        </Card>

        <Card>
          <CardArt width="260" height="260" viewBox="0 0 260 260">
            <path d="M17 0 H260 V260 H30 Z" fill="#fef1ef" />
            <path d="M62 20 H104 L108 90 L140 22 Q200 10 236 50 L260 100 V220 H70 Z" fill="#fef5f3" />
            <path d="M85 42 H112 V110 L140 42 H168 L118 170 H92 Z M240 60 Q205 25 180 60 Q160 100 200 125 Q220 150 170 160 V200 Q260 190 245 130 Q195 100 205 85 Q215 70 236 82 Z" fill="#fce9e6" />
          </CardArt>
          <CardHead>
            <svg width="48" height="48" viewBox="0 0 48 48">
              <circle cx="24" cy="24" r="24" fill="url(#badge)" />
              <text x="23" y="34" textAnchor="middle" fill="#fff" fontSize="28" fontWeight="800" fontStyle="italic" fontFamily="Open Sans" textLength="30" lengthAdjust="spacingAndGlyphs">VS</text>
            </svg>
            <Gap $w={13} />
            <Han $s={41.5} $w={500} $c="#2e2e2e">多空看盘</Han>
          </CardHead>
          <Vote>
            <VoteSide>
              <VoteDisc><svg width="24" height="20" viewBox="0 0 24 20"><path d="M12 3 L21 17 H3 Z" fill="#e1431b" stroke="#e1431b" strokeWidth="3" strokeLinejoin="round" /></svg></VoteDisc>
              <VoteText><Han $s={35} $c="#d0492a">看涨</Han><Text $s={32} $c="#d0492a">**%</Text></VoteText>
            </VoteSide>
            <VoteSide $end>
              <VoteDisc><svg width="24" height="20" viewBox="0 0 24 20"><path d="M12 17 L21 3 H3 Z" fill="#3bb061" stroke="#3bb061" strokeWidth="3" strokeLinejoin="round" /></svg></VoteDisc>
              <VoteText><Han $s={35} $c="#44ab66">看跌</Han><Text $s={32} $c="#44ab66">**%</Text></VoteText>
            </VoteSide>
          </Vote>
        </Card>
      </Cards>

      <BottomBar>
        <IndexBox>
          <Caret $up $w={21} $h={8} $c="#7a7a7a" />
          <IndexRow $center>
            <Num $s={38.5} $c={C.red} $ls={0}>3870.73</Num>
          </IndexRow>
          <IndexRow>
            <Han $s={35} $c={C.sub}>上证</Han>
            <Num $s={38.5} $c={C.red} $ls={0.4}>0.89%</Num>
          </IndexRow>
        </IndexBox>
        <Action><TradeIcon /><Han $s={35} $c={C.sub}>交易</Han></Action>
        <Action><PostIcon /><Han $s={35} $c={C.sub}>发帖</Han></Action>
        <Action><FeatureIcon /><Han $s={35} $c={C.sub}>功能</Han></Action>
        <Action><AddIcon /><Han $s={35} $c={C.orange}>加自选</Han></Action>
      </BottomBar>

      <NavBar>
        <NavSlot $ml={262}>
          <svg width="37" height="38" viewBox="0 0 37 38" stroke="#9b9b9b" strokeWidth="2.500"><path d="M0 2.500H37 M0 19H37 M0 35.500H37" /></svg>
        </NavSlot>
        <NavSlot $ml={232}>
          <svg width="37" height="38" viewBox="0 0 37 38" fill="none" stroke="#9b9b9b" strokeWidth="2.500"><rect x="1.500" y="1.500" width="34" height="35" rx="7" /></svg>
        </NavSlot>
        <NavSlot $ml={230}>
          <svg width="37" height="38" viewBox="0 0 37 38" fill="none" stroke="#9b9b9b" strokeWidth="2.500" strokeLinejoin="round"><path d="M33 3 Q34 2 34 4 V34 Q34 36 33 35 L3 21 Q1 19 3 17 Z" /></svg>
        </NavSlot>
      </NavBar>
    </Screen>
  );
}
